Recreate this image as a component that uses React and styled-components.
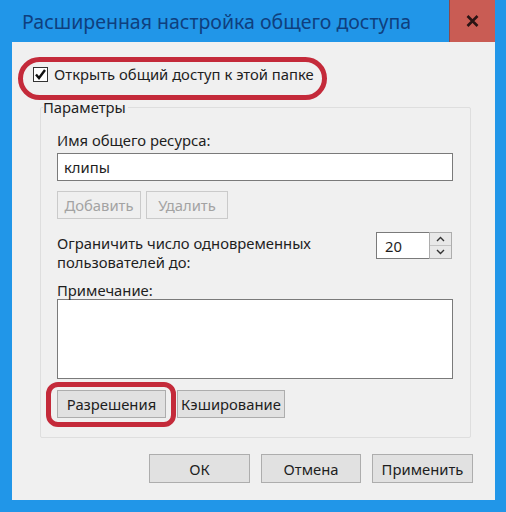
import React from 'react';
import styled, { createGlobalStyle } from 'styled-components';

const GlobalStyle = createGlobalStyle`
    html, body {
        margin : 0;
        padding : 0;
        background : #2196e8;
    }
`;

const Frame = styled.div`
    width : 506px;
    height : 512px;
    box-sizing : border-box;
    padding : 0 11px 12px 12px;
    background : #2196e8;
    display : flex;
    flex-direction : column;
    font-family : 'Noto Sans', 'Open Sans', sans-serif;
    font-size : 14.8px;
    color : #1e1e1e;
`;

const TitleBar = styled.div`
    height : 42px;
    display : flex;
    align-items : stretch;
`;

const Title = styled.div`
    flex : 1;
    padding-left : 10px;
    display : flex;
    align-items : center;
    font-size : 19.5px;
    color : #0f3f7e;
`;

const CloseButton = styled.div`
    width : 45px;
    background : #c95c54;
    display : flex;
    align-items : center;
    justify-content : center;
    border-left : 1px solid #8a4a4a;
`;

const Body = styled.div`
    flex : 1;
    background : #f0f0f0;
    display : flex;
    flex-direction : column;
    padding : 25px 22px 17px 21px;
`;

const CheckRow = styled.label`
    position : relative;
    display : flex;
    align-items : center;
    gap : 6px;
    height : 15px;
    line-height : 15px;
`;

const Highlight = styled.div`
    position : absolute;
    left : ${p => p.left}px;
    top : ${p => p.top}px;
    width : ${p => p.width}px;
    height : ${p => p.height}px;
    box-sizing : border-box;
    border : 5px solid #c42a3a;
    border-radius : ${p => p.radius}px;
    pointer-events : none;
`;

const CheckBox = styled.span`
    width : 15px;
    height : 15px;
    box-sizing : border-box;
    border : 1px solid #333;
    background : #fff;
    display : flex;
    align-items : center;
    justify-content : center;
`;

const Group = styled.fieldset`
    margin : 15px 2px 0 7px;
    padding : 3px 17px 19px 16px;
    border : 1px solid #dedede;
    border-radius : 2px;
`;

const Legend = styled.legend`
    padding : 0 2px 0 0;
    margin-left : -14px;
    line-height : 20px;
`;

const Label = styled.div`
    line-height : ${p => p.lh || 20}px;
    margin-top : ${p => p.mt || 0}px;
`;

const TextInput = styled.div`
    height : 28px;
    box-sizing : border-box;
    margin-top : ${p => p.mt || 0}px;
    border : 1px solid #7a7a7a;
    background : #fff;
    display : flex;
    align-items : center;
    padding-left : 6px;
`;

const TextArea = styled.div`
    height : 80px;
    box-sizing : border-box;
    border : 1px solid #7a7a7a;
    background : #fff;
`;

const ButtonRow = styled.div`
    display : flex;
    gap : ${p => p.gap}px;
    margin-top : ${p => p.mt}px;
`;

const Button = styled.div`
    position : relative;
    width : ${p => p.width}px;
    height : ${p => p.height || 28}px;
    box-sizing : border-box;
    border : 1px solid ${p => p.disabled ? '#cacaca' : '#adadad'};
    background : ${p => p.disabled ? '#efefef' : '#e1e1e1'};
    color : ${p => p.disabled ? '#a3a3a3' : '#1e1e1e'};
    display : flex;
    align-items : center;
    justify-content : center;
`;

const LimitRow = styled.div`
    display : flex;
    justify-content : space-between;
    align-items : flex-start;
    margin-top : 13px;
`;

const LimitText = styled.div`
    line-height : 19px;
    margin-top : 2px;
`;

const Spinner = styled.div`
    display : flex;
    height : 27px;
    margin-right : 1px;
`;

const SpinValue = styled.div`
    width : 53px;
    box-sizing : border-box;
    border : 1px solid #7a7a7a;
    border-right : none;
    background : #fff;
    display : flex;
    align-items : center;
    padding-left : 8px;
`;

const SpinButtons = styled.div`
    width : 23px;
    display : flex;
    flex-direction : column;
    border : 1px solid #adadad;
    box-sizing : border-box;
`;

const SpinButton = styled.div`
    flex : 1;
    background : #e8e8e8;
    display : flex;
    align-items : center;
    justify-content : center;
    border-top : ${p => p.bottom ? '1px solid #c4c4c4' : 'none'};
`;

const Footer = styled.div`
    display : flex;
    justify-content : flex-end;
    gap : 11px;
    margin-top : auto;
`;

const Chevron = ({down}) => (
    <svg width="9" height="6" viewBox="0 0 9 6">
        <path d={down ? "M1 1 L4.5 4.5 L8 1" : "M1 5 L4.5 1.5 L8 5"} fill="none" stroke="#333" strokeWidth="1.4"/>
    </svg>
);

export default function App() {
    return (
        <>
            <GlobalStyle/>
            <Frame>
                <TitleBar>
                    <Title>Расширенная настройка общего доступа</Title>
                    <CloseButton>
                        <svg width="13" height="12" viewBox="0 0 13 12">
                            <path d="M1.5 1 L11.5 11 M11.5 1 L1.5 11" stroke="#2a1414" strokeWidth="2.6"/>
                        </svg>
                    </CloseButton>
                </TitleBar>
                <Body>
                    <CheckRow>
                        <Highlight left={-15} top={-10} width={309} height={43} radius={22}/>
                        <CheckBox>
                            <svg width="13" height="13" viewBox="0 0 13 13">
                                <path d="M2 6.5 L5 10 L11 2" fill="none" stroke="#111" strokeWidth="2.4"/>
                            </svg>
                        </CheckBox>
                        <span>Открыть общий доступ к этой папке</span>
                    </CheckRow>
                    <Group>
                        <Legend>Параметры</Legend>
                        <Label mt={10}>Имя общего ресурса:</Label>
                        <TextInput mt={3}>клипы</TextInput>
                        <ButtonRow gap={5} mt={10}>
                            <Button width={84} disabled>Добавить</Button>
                            <Button width={82} disabled>Удалить</Button>
                        </ButtonRow>
                        <LimitRow>
                            <LimitText>Ограничить число одновременных<br/>пользователей до:</LimitText>
                            <Spinner>
                                <SpinValue>20</SpinValue>
                                <SpinButtons>
                                    <SpinButton><Chevron/></SpinButton>
                                    <SpinButton bottom><Chevron down/></SpinButton>
                                </SpinButtons>
                            </Spinner>
                        </LimitRow>
                        <Label mt={9} lh={18}>Примечание:</Label>
                        <TextArea/>
                        <ButtonRow gap={11} mt={11}>
                            <Button width={109}>
                                <Highlight left={-12} top={-9} width={130} height={45} radius={12}/>
                                Разрешения
                            </Button>
                            <Button width={108}>Кэширование</Button>
                        </ButtonRow>
                    </Group>
                    <Footer>
                        <Button width={101} height={29}>ОК</Button>
                        <Button width={100} height={29}>Отмена</Button>
                        <Button width={101} height={29}>Применить</Button>
                    </Footer>
                </Body>
            </Frame>
        </>
    );
}
